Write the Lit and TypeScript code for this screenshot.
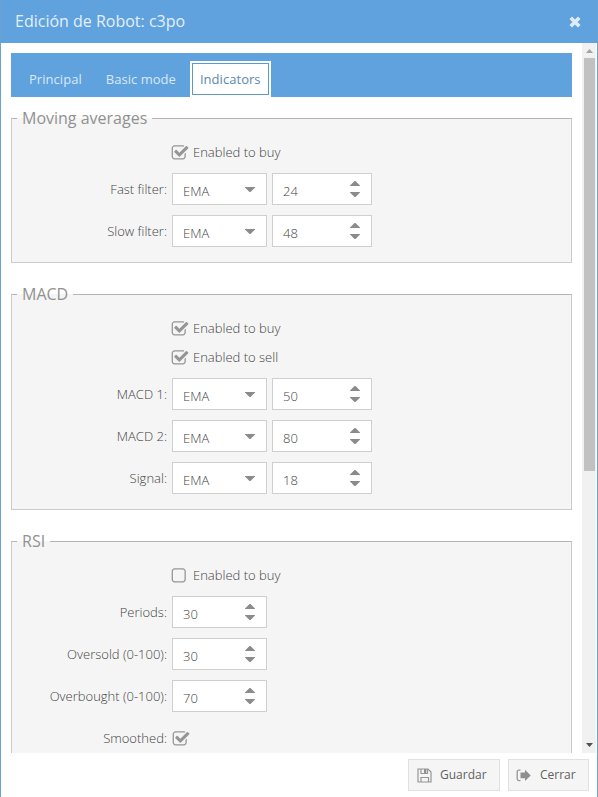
import { LitElement, html, css, svg, nothing } from "lit";
import { customElement, property } from "lit/decorators.js";

const CHECKED =
  "M1472 930v318q0 119-84.5 203.5t-203.5 84.5h-832q-119 0-203.5-84.5t-84.5-203.5v-832q0-119 84.5-203.5t203.5-84.5h832q63 0 117 25 15 7 18 23 3 17-9 29l-49 49q-10 10-23 10-3 0-9-2-23-6-45-6h-832q-66 0-113 47t-47 113v832q0 66 47 113t113 47h832q66 0 113-47t47-113v-254q0-13 9-22l64-64q10-10 23-10 6 0 12 3 20 8 20 29zm231-489l-814 814q-24 24-57 24t-57-24l-430-430q-24-24-24-57t24-57l110-110q24-24 57-24t57 24l263 263 647-647q24-24 57-24t57 24l110 110q24 24 24 57t-24 57z";
const UNCHECKED =
  "M1184 256h-832q-66 0-113 47t-47 113v832q0 66 47 113t113 47h832q66 0 113-47t47-113v-832q0-66-47-113t-113-47zm288 160v832q0 119-84.5 203.5t-203.5 84.5h-832q-119 0-203.5-84.5t-84.5-203.5v-832q0-119 84.5-203.5t203.5-84.5h832q119 0 203.5 84.5t84.5 203.5z";

@customElement("check-box")
class CheckBox extends LitElement {
  @property({ type: Boolean }) checked = false;
  @property() text = "";
  static styles = css`
    :host {
      display: flex;
      align-items: center;
      height: 29px;
    }
    svg {
      width: 18px;
      height: 18px;
      margin-left: -1px;
      fill: #959595;
      flex: none;
    }
    span {
      margin-left: 4px;
      padding-bottom: 2px;
      line-height: 18px;
    }
  `;
  render() {
    return html`<svg viewBox="0 0 1792 1792"><path d=${this.checked ? CHECKED : UNCHECKED}></path></svg>
      ${this.text ? html`<span>${this.text}</span>` : nothing}`;
  }
}

@customElement("input-box")
class InputBox extends LitElement {
  @property() value = "";
  @property() kind = "spin";
  static styles = css`
    :host {
      display: flex;
      box-sizing: border-box;
      align-items: center;
      justify-content: space-between;
      width: 95px;
      height: 32px;
      padding: 0 11px 0 10px;
      border: 1px solid #cfcfcf;
      background: #fff;
    }
    :host([wide]) {
      width: 100px;
    }
    span {
      line-height: 18px;
      padding-top: 4px;
    }
    svg {
      width: 10px;
      height: 16px;
      fill: #8b8b8b;
    }
  `;
  render() {
    const glyph =
      this.kind === "spin"
        ? svg`<path d="M0 5V4.500L4.500 0H5.500L10 4.500V5ZM0 11H10V11.500L5.500 16H4.500L0 11.500Z"></path>`
        : svg`<path d="M0 6H10V6.500L5.500 11H4.500L0 6.500Z"></path>`;
    return html`<span>${this.value}</span><svg viewBox="0 0 10 16">${glyph}</svg>`;
  }
}

@customElement("app-root")
class AppRoot extends LitElement {
  static styles = css`
    :host {
      display: flex;
      flex-direction: column;
      box-sizing: border-box;
      width: 598px;
      height: 797px;
      overflow: hidden;
      border: solid #6ba3d0;
      border-width: 0 1px;
      background: #fff;
      color: #444;
      font: 300 13px/18px "Open Sans", sans-serif;
    }
    header {
      display: flex;
      flex: none;
      align-items: center;
      justify-content: space-between;
      height: 43px;
      margin: 0 -1px;
      padding: 0 17px 0 15px;
      background: #5fa2dd;
      color: #e4effa;
      font-size: 16px;
      font-weight: 400;
    }
    header span {
      padding-bottom: 2px;
    }
    header svg {
      width: 12px;
      height: 12px;
      stroke: #dfecf8;
      stroke-width: 3.6;
      stroke-linecap: square;
    }
    main {
      display: flex;
      height: 710px;
      flex: none;
    }
    .content {
      flex: 1;
      overflow: hidden;
      padding: 10px 10px 0;
      box-sizing: border-box;
    }
    nav {
      display: flex;
      align-items: flex-end;
      height: 44px;
      margin-bottom: 11px;
      padding-left: 8px;
      box-sizing: border-box;
      background: #5fa2dd;
      color: #d9e8f6;
      font-weight: 400;
      letter-spacing: 0.04px;
    }
    nav span {
      padding: 0 10px;
      height: 36px;
      line-height: 36px;
      margin-right: 4px;
    }
    nav .active {
      box-sizing: border-box;
      border: 2px solid #fff;
      padding: 0 8px;
      width: 81px;
      line-height: 32px;
      height: 36px;
      background: #fff;
      outline: 1px solid #5f97c7;
      outline-offset: -3px;
      color: #5a88b0;
    }
    fieldset {
      margin: 0 0 21px;
      padding: 9px 0 10px;
      min-width: 0;
      border: 1px solid #cbcbcb;
      border-top-color: #b4b4b4;
      background: #f5f5f5;
    }
    legend {
      height: 21px;
      margin-left: 5px;
      padding: 0 5px;
      line-height: 21px;
      font-size: 16px;
      font-weight: 400;
      color: #919191;
    }
    .checks {
      display: flex;
      flex-direction: column;
      padding-left: 160px;
      margin-bottom: 1px;
    }
    .row {
      display: flex;
      align-items: center;
      gap: 5px;
      height: 42px;
    }
    .row label {
      width: 155px;
      text-align: right;
      white-space: nowrap;
    }
    .row check-box {
      margin: 1px 0 0 1px;
    }
    .scroll {
      display: flex;
      flex-direction: column;
      align-items: center;
      justify-content: space-between;
      width: 14px;
      margin-right: 1px;
      background: #f1f1f1;
    }
    .scroll svg {
      width: 7px;
      height: 15px;
      fill: #a3a3a3;
    }
    .scroll .down {
      fill: #505050;
    }
    .thumb {
      width: 11px;
      height: 413px;
      margin-bottom: auto;
      background: #c1c1c1;
    }
    footer {
      display: flex;
      justify-content: flex-end;
      gap: 8px;
      padding: 6px 8px 0 0;
    }
    button {
      display: flex;
      align-items: center;
      box-sizing: border-box;
      width: 92px;
      height: 32px;
      padding: 0 0 0 8px;
      border: 1px solid #e1e1e1;
      background: #f5f5f5;
      color: #5f5f5f;
      font: 400 12px/18px "Open Sans", sans-serif;
    }
    button span {
      padding-bottom: 1px;
    }
    button svg {
      width: 15px;
      height: 15px;
      margin-right: 8px;
      fill: none;
      stroke: #969696;
    }
    .close {
      width: 81px;
      padding-left: 7px;
    }
    .close svg {
      margin-right: 9px;
    }
    .solid {
      fill: #8f8f8f;
      stroke: none;
    }
  `;

  private filter(label: string, value: string) {
    return html`<div class="row">
      <label>${label}:</label>
      <input-box kind="select" value="EMA"></input-box>
      <input-box wide value=${value}></input-box>
    </div>`;
  }

  private number(label: string, value: string) {
    return html`<div class="row"><label>${label}:</label><input-box value=${value}></input-box></div>`;
  }

  render() {
    return html`
      <header>
        <span>Edición de Robot: c3po</span>
        <svg viewBox="0 0 12 12"><path d="M3 3L9 9M9 3L3 9"></path></svg>
      </header>
      <main>
        <div class="content">
          <nav>
            <span>Principal</span><span>Basic mode</span><span class="active">Indicators</span>
          </nav>
          <fieldset>
            <legend>Moving averages</legend>
            <div class="checks"><check-box checked text="Enabled to buy"></check-box></div>
            ${this.filter("Fast filter", "24")} ${this.filter("Slow filter", "48")}
          </fieldset>
          <fieldset>
            <legend>MACD</legend>
            <div class="checks">
              <check-box checked text="Enabled to buy"></check-box>
              <check-box checked text="Enabled to sell"></check-box>
            </div>
            ${this.filter("MACD 1", "50")} ${this.filter("MACD 2", "80")} ${this.filter("Signal", "18")}
          </fieldset>
          <fieldset>
            <legend>RSI</legend>
            <div class="checks"><check-box text="Enabled to buy"></check-box></div>
            ${this.number("Periods", "30")} ${this.number("Oversold (0-100)", "30")}
            ${this.number("Overbought (0-100)", "70")}
            <div class="row"><label>Smoothed:</label><check-box checked></check-box></div>
          </fieldset>
        </div>
        <div class="scroll">
          <svg viewBox="0 0 7 15"><path d="M0 10L3.5 6L7 10Z"></path></svg>
          <div class="thumb"></div>
          <svg class="down" viewBox="0 0 7 15"><path d="M0 5H7L3.5 9Z"></path></svg>
        </div>
      </main>
      <footer>
        <button>
          <svg viewBox="0 0 15 15">
            <path d="M1 1H11L14 4V14H1Z" stroke-width="1.2"></path>
            <path d="M4 14V9.500H11.500V14M4 1V5.500H10.500V1" stroke-width="1.2"></path>
            <path class="solid" d="M7 1H9.300V5H7Z"></path>
          </svg>
          <span>Guardar</span>
        </button>
        <button class="close">
          <svg viewBox="0 0 15 15">
            <path d="M4.500 2.200H3Q1.200 2.200 1.200 4V10.800Q1.200 12.600 3 12.600H4.500" stroke-width="1.3"></path>
            <path class="solid" d="M4.500 4.500H9V1.800L14.700 7.400L9 13V10.300H4.500Z"></path>
          </svg>
          <span>Cerrar</span>
        </button>
      </footer>
    `;
  }
}
